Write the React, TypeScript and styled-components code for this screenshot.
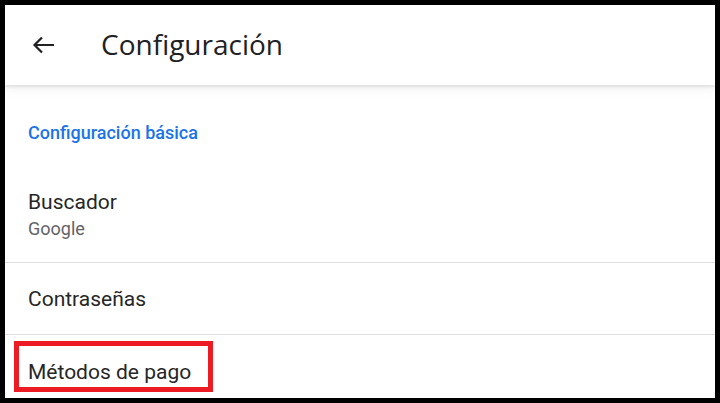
import React from "react";
import styled, { createGlobalStyle } from "styled-components";

const GlobalStyle = createGlobalStyle`
  html, body {
    margin: 0;
    padding: 0;
    background: #000;
  }
  body {
    font-family: Roboto, "Noto Sans", sans-serif;
    -webkit-font-smoothing: antialiased;
  }
`;

const Frame = styled.div`
  box-sizing: border-box;
  width: 720px;
  height: 403px;
  border: 5px solid #000;
  background: #fff;
  overflow: hidden;
  display: flex;
  flex-direction: column;
`;

const Toolbar = styled.header`
  position: relative;
  z-index: 1;
  height: 80px;
  flex-shrink: 0;
  display: flex;
  align-items: center;
  background: #fff;
  box-shadow: 0 2px 3px rgba(0, 0, 0, 0.1), 0 6px 10px rgba(0, 0, 0, 0.04);
`;

const BackButton = styled.button`
  width: 24px;
  height: 24px;
  margin-left: 27px;
  padding: 0;
  border: none;
  background: none;
  display: flex;
  align-items: center;
  justify-content: center;
  color: #202124;
`;

const Title = styled.h1`
  margin: 0 0 0 45px;
  font-family: "Open Sans", Roboto, sans-serif;
  font-size: 28px;
  font-weight: 400;
  color: #202124;
  padding-bottom: 2px;
`;

const List = styled.main`
  flex: 1;
  display: flex;
  flex-direction: column;
`;

const SectionLabel = styled.div`
  padding: 38px 23px 0;
  height: 52px;
  line-height: 20px;
  font-size: 18px;
  font-weight: 500;
  color: #1a73e8;
`;

const Row = styled.div<{ $top: number; $bottom: number }>`
  position: relative;
  padding: ${(p) => p.$top}px 23px ${(p) => p.$bottom}px;
  border-bottom: 1px solid #dedede;
  &:last-child {
    border-bottom: none;
  }
`;

const Primary = styled.div`
  font-size: 21px;
  line-height: 24px;
  color: #262626;
`;

const Secondary = styled.div`
  margin-top: 5px;
  font-size: 18px;
  line-height: 20px;
  color: #5f6368;
`;

const Highlight = styled.span`
  position: absolute;
  left: 9px;
  top: 6px;
  width: 199px;
  height: 51px;
  box-sizing: border-box;
  border: 5px solid #ed1c24;
`;

export default function App() {
  return (
    <>
      <GlobalStyle />
      <Frame>
        <Toolbar>
          <BackButton aria-label="Atrás">
            <svg width="24" height="20" viewBox="0 0 24 20" fill="none">
              <path
                d="M22 10H3M10 2.5L2.5 10l7.5 7.5"
                stroke="currentColor"
                strokeWidth="2.2"
              />
            </svg>
          </BackButton>
          <Title>Configuración</Title>
        </Toolbar>
        <List>
          <SectionLabel>Configuración básica</SectionLabel>
          <Row $top={15} $bottom={23}>
            <Primary>Buscador</Primary>
            <Secondary>Google</Secondary>
          </Row>
          <Row $top={24} $bottom={23}>
            <Primary>Contraseñas</Primary>
          </Row>
          <Row $top={25} $bottom={20}>
            <Primary>Métodos de pago</Primary>
            <Highlight />
          </Row>
        </List>
      </Frame>
    </>
  );
}
